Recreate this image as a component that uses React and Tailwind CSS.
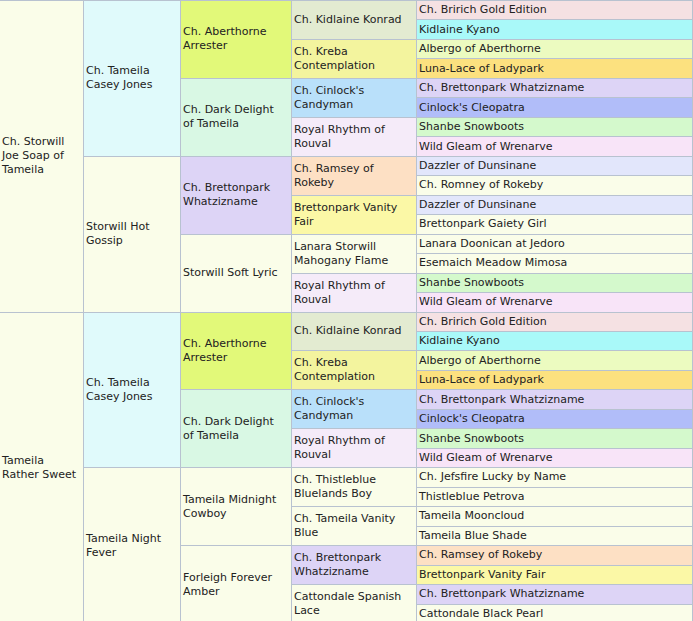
import React from 'react';

const n = (name, bg, sire, dam) => ({ name, bg, sire, dam });

const CREAM = 'bg-[#fafde9]';
const LAV = 'bg-[#ddd4f6]';

const dazzler = () => n('Dazzler of Dunsinane', 'bg-[#e2e6fb]');
const ramsey = n('Ch. Ramsey of Rokeby', 'bg-[#fde0c4]', dazzler(), n('Ch. Romney of Rokeby', CREAM));
const vanityFair = n('Brettonpark Vanity Fair', 'bg-[#fbf8a6]', dazzler(), n('Brettonpark Gaiety Girl', CREAM));
const whatzizname = n('Ch. Brettonpark Whatzizname', LAV, ramsey, vanityFair);

const royalRhythm = n(
  'Royal Rhythm of Rouval',
  'bg-[#f5ebf9]',
  n('Shanbe Snowboots', 'bg-[#d4f9cc]'),
  n('Wild Gleam of Wrenarve', 'bg-[#f8e4f8]')
);

const casey = n(
  'Ch. Tameila Casey Jones',
  'bg-[#e0fafb]',
  n(
    'Ch. Aberthorne Arrester',
    'bg-[#e2f979]',
    n('Ch. Kidlaine Konrad', 'bg-[#e3ebd1]', n('Ch. Bririch Gold Edition', 'bg-[#f5e1e3]'), n('Kidlaine Kyano', 'bg-[#a9f9f9]')),
    n('Ch. Kreba Contemplation', 'bg-[#f3f49e]', n('Albergo of Aberthorne', 'bg-[#ecfbc0]'), n('Luna-Lace of Ladypark', 'bg-[#fce17f]'))
  ),
  n(
    'Ch. Dark Delight of Tameila',
    'bg-[#d9f8e4]',
    n("Ch. Cinlock's Candyman", 'bg-[#b9e0fa]', n('Ch. Brettonpark Whatzizname', LAV), n("Cinlock's Cleopatra", 'bg-[#b1bdf9]')),
    royalRhythm
  )
);

const pedigree = [
  n(
    'Ch. Storwill Joe Soap of Tameila',
    CREAM,
    casey,
    n(
      'Storwill Hot Gossip',
      CREAM,
      whatzizname,
      n(
        'Storwill Soft Lyric',
        CREAM,
        n('Lanara Storwill Mahogany Flame', CREAM, n('Lanara Doonican at Jedoro', CREAM), n('Esemaich Meadow Mimosa', CREAM)),
        royalRhythm
      )
    )
  ),
  n(
    'Tameila Rather Sweet',
    CREAM,
    casey,
    n(
      'Tameila Night Fever',
      CREAM,
      n(
        'Tameila Midnight Cowboy',
        CREAM,
        n('Ch. Thistleblue Bluelands Boy', CREAM, n('Ch. Jefsfire Lucky by Name', CREAM), n('Thistleblue Petrova', CREAM)),
        n('Ch. Tameila Vanity Blue', CREAM, n('Tameila Mooncloud', CREAM), n('Tameila Blue Shade', CREAM))
      ),
      n(
        'Forleigh Forever Amber',
        CREAM,
        whatzizname,
        n('Cattondale Spanish Lace', CREAM, n('Ch. Brettonpark Whatzizname', LAV), n('Cattondale Black Pearl', CREAM))
      )
    )
  ),
];

// column widths for generations 1-4, the last one takes the rest
const widths = ['w-[83px] shrink-0', 'w-[96px] shrink-0', 'w-[110px] shrink-0', 'w-[124px] shrink-0', 'flex-1'];

const Node = ({ dog, depth }) => {
  const last = depth === 4;
  return (
    <div className="flex flex-1 min-h-0 gap-px">
      <div className={`flex items-center overflow-hidden pl-[2px] pr-[6px] ${widths[depth]} ${dog.bg}`}>
        {dog.name}
      </div>
      {!last && (
        <div className="flex flex-1 flex-col gap-px">
          <Node dog={dog.sire} depth={depth + 1} />
          <Node dog={dog.dam} depth={depth + 1} />
        </div>
      )}
    </div>
  );
};

const App = () => {
  return (
    <div className="w-full h-[623px] flex flex-col gap-px border-t border-r border-[#b8c2d0] bg-[#b8c2d0] font-[family-name:Verdana,DejaVu_Sans,sans-serif] text-[11px] leading-[14px] text-[#222]">
      {pedigree.map((dog, i) => (
        <Node key={i} dog={dog} depth={0} />
      ))}
    </div>
  );
};

export default App;
